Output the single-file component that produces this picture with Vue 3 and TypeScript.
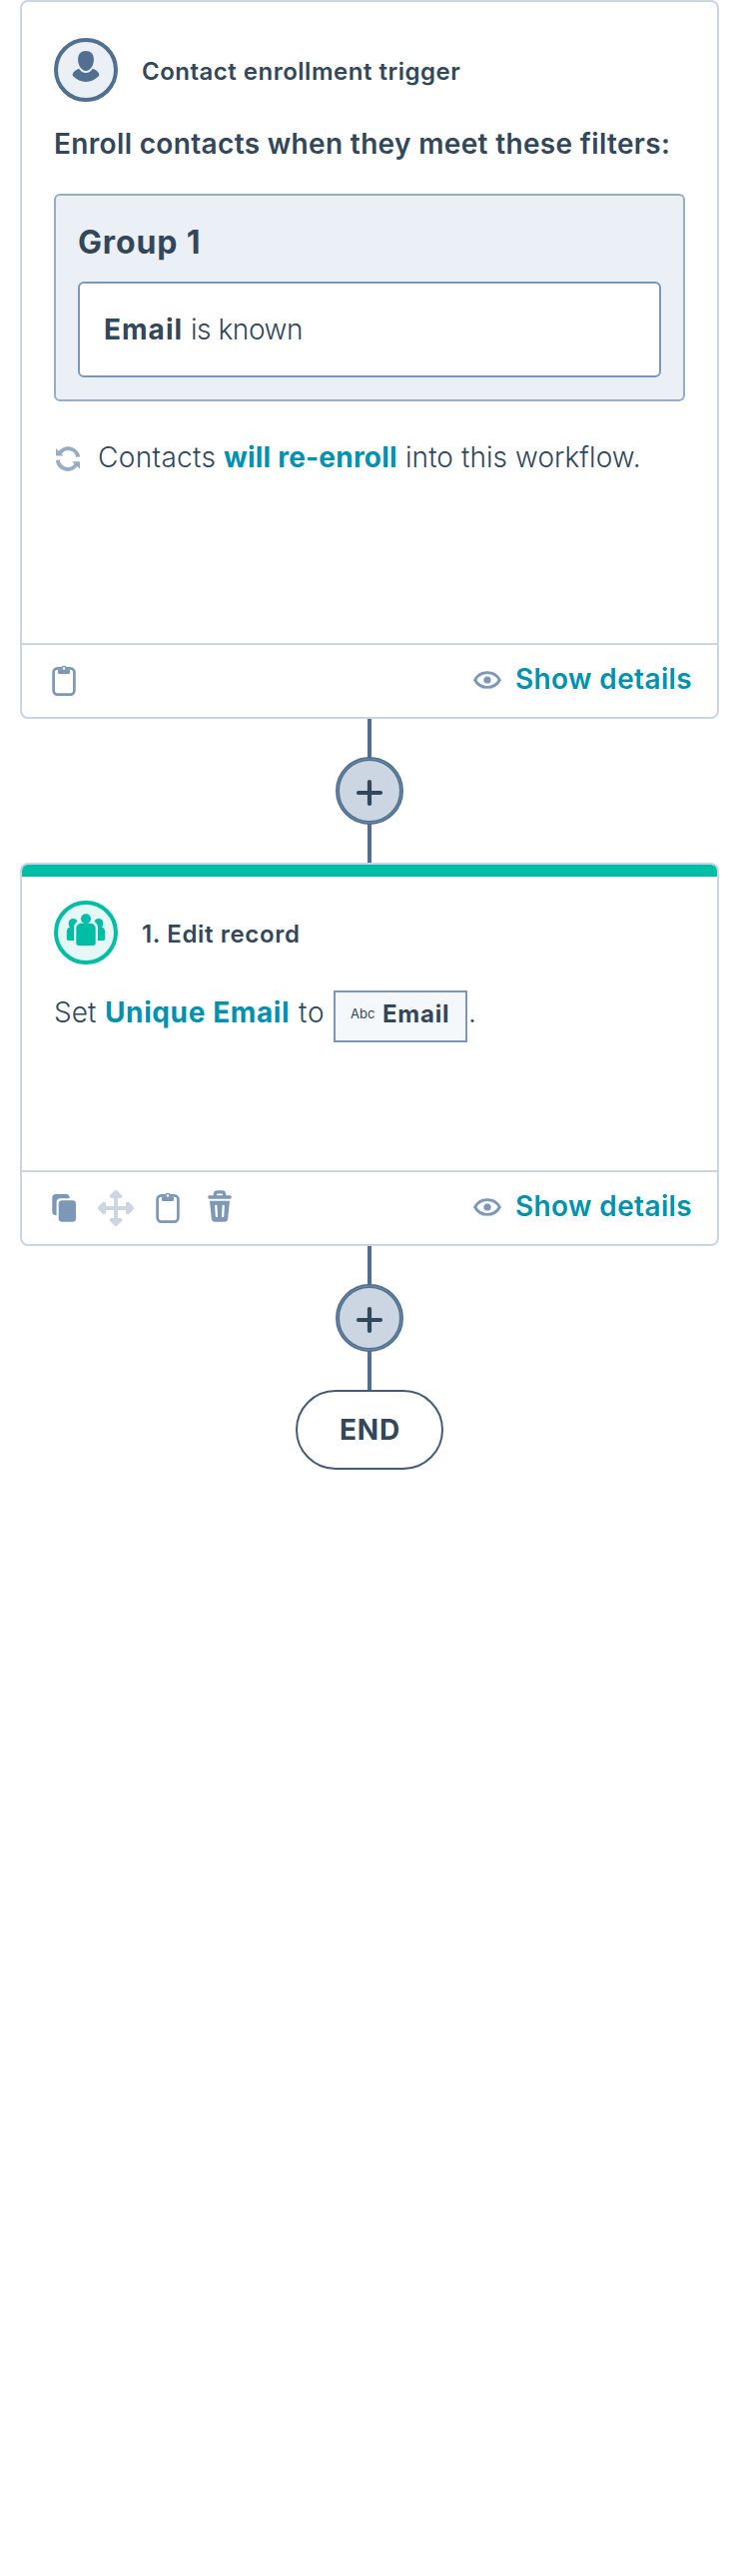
<script setup lang="ts">
type Action = 'copy' | 'move' | 'clipboard' | 'trash'

const triggerActions: Action[] = ['clipboard']
const stepActions: Action[] = ['copy', 'move', 'clipboard', 'trash']
</script>

<template>
  <main class="flow">
    <section class="card trigger">
      <header class="head">
        <svg class="avatar" viewBox="0 0 64 64">
          <circle cx="32" cy="32" r="30" fill="#eaf0f6" stroke="#516f90" stroke-width="4" />
          <path fill="#516f90" d="M32 13c4.900 0 7.900 3.400 7.900 8.500C39.900 27.500 36.500 32.900 32 32.900S24.100 27.500 24.100 21.500C24.100 16.400 27.100 13 32 13Z" />
          <path fill="#516f90" d="M25.200 30.700c1.500 2.700 4 4.300 6.800 4.300s5.300-1.600 6.800-4.300c3.300 1 5.700 3 6.500 5.600.3 1-.1 1.600-.9 2.300C41.200 42 36.900 44 32 44s-9.200-2-12.400-5.400c-.8-.7-1.200-1.300-.9-2.300.8-2.600 3.200-4.600 6.500-5.600Z" />
        </svg>
        <span class="title t-trigger">Contact enrollment trigger</span>
      </header>
      <h2 class="lead">Enroll contacts when they meet these filters:</h2>
      <div class="group">
        <h3 class="group-title">Group 1</h3>
        <div class="filter"><b class="f-name">Email</b><span class="f-op">is known</span></div>
      </div>
      <p class="reenroll">
        <svg class="sync" viewBox="0 0 24 25">
          <g fill="none" stroke="#99acc2" stroke-width="4">
            <path d="M3.500 7.500A10 10 0 0 1 22.200 10.800" />
            <path d="M1.800 13.800A10 10 0 0 0 20.600 17.600" />
          </g>
          <path fill="#99acc2" d="M0 2v6.800q0 .7.700.7H7.600ZM24 22.700v-6.800q0-.7-.7-.7H16.200Z" />
        </svg>
        <span class="r-a">Contacts</span><a class="r-b">will re-enroll</a><span class="r-c">into this workflow.</span>
      </p>
      <footer class="foot">
        <div class="actions">
          <span v-for="a in triggerActions" :key="a" class="action">
            <svg class="icon" viewBox="0 0 36 36">
              <rect x="7.600" y="5.400" width="20.800" height="26.200" rx="4" fill="none" stroke="#7c98b6" stroke-width="2.700" />
              <path fill="#7c98b6" d="M12 6.500H24V10q0 1-1 1H13q-1 0-1-1Z" />
              <circle cx="18" cy="5.600" r="2.100" fill="#fff" stroke="#7c98b6" stroke-width="1.500" />
            </svg>
          </span>
        </div>
        <a class="details">
          <svg class="eye" viewBox="0 0 30 20">
            <path d="M2.700 10C5.200 5.200 9.600 2.600 15 2.600S24.800 5.200 27.300 10C24.800 14.800 20.400 17.400 15 17.400S5.200 14.800 2.700 10Z" fill="none" stroke="#7c98b6" stroke-width="2.900" stroke-linejoin="round" />
            <circle cx="15" cy="10" r="3.600" fill="#7c98b6" />
          </svg>
          <span>Show details</span>
        </a>
      </footer>
    </section>

    <div class="link">
      <button class="add" aria-label="Add step">
        <svg viewBox="0 0 68 68"><circle cx="34" cy="34" r="32" /><circle class="ring" cx="34" cy="34" r="32" /><path d="M34 25v22M23 36h22" /></svg>
      </button>
    </div>

    <section class="card step">
      <div class="stripe"></div>
      <header class="head">
        <svg class="avatar" viewBox="0 0 64 64">
          <circle cx="32" cy="32" r="30" fill="#e5f8f6" stroke="#00bda5" stroke-width="4" />
          <g fill="#00bda5">
            <circle cx="32" cy="18.200" r="5" />
            <path d="M22.300 28c0-3 2.400-5.200 5.400-5.200h8.600c3 0 5.400 2.200 5.400 5.200v15q0 2-2 2H24.300q-2 0-2-2Z" />
            <path d="M19.300 18c2.100 0 3.700 1.100 4.300 3-2 1.100-3.200 2.900-3.500 5.200V40H14.500q-1.700 0-1.700-1.700V31c0-2.200 1.200-3.800 3.100-4.300-.8-1-1.200-2.600-1.200-4.100 0-2.700 2-4.600 4.600-4.600Z" />
            <path transform="matrix(-1 0 0 1 64 0)" d="M19.300 18c2.100 0 3.700 1.100 4.300 3-2 1.100-3.200 2.900-3.500 5.200V40H14.500q-1.700 0-1.700-1.700V31c0-2.200 1.200-3.800 3.100-4.300-.8-1-1.200-2.600-1.200-4.100 0-2.700 2-4.600 4.600-4.600Z" />
          </g>
        </svg>
        <span class="title t-step">1. Edit record</span>
      </header>
      <p class="set">
        <span class="s-a">Set</span><a class="s-b">Unique Email</a><span class="s-c">to</span>
        <span class="token"><small>Abc</small><b>Email</b></span><span class="s-d">.</span>
      </p>
      <footer class="foot">
        <div class="actions">
          <span v-for="a in stepActions" :key="a" class="action">
            <svg v-if="a === 'copy'" class="icon" viewBox="0 0 36 36" fill="#7c98b6">
              <rect x="12.700" y="10.300" width="17.300" height="21.400" rx="3.400" />
              <path d="M9.800 4h10.400c2 0 3.400 1.300 3.500 4.200H14.600c-2.600 0-4 1.500-4 4v13C7.800 25.100 6.300 23.900 6.300 22V7.500C6.300 5.400 7.700 4 9.800 4Z" />
            </svg>
            <svg v-else-if="a === 'move'" class="icon" viewBox="0 0 36 36" fill="#cbd6e2" stroke="#cbd6e2" stroke-width="4" stroke-linecap="round" stroke-linejoin="round">
              <path d="M18 3v30M3 18h30" />
              <path d="M13.700 6.100 18 2l4.300 4.100ZM13.700 29.900 18 34l4.300-4.100ZM6.100 13.700 2 18l4.100 4.300ZM29.900 13.700 34 18l-4.100 4.300Z" />
            </svg>
            <svg v-else-if="a === 'clipboard'" class="icon" viewBox="0 0 36 36">
              <rect x="7.600" y="5.400" width="20.800" height="26.200" rx="4" fill="none" stroke="#7c98b6" stroke-width="2.700" />
              <path fill="#7c98b6" d="M12 6.500H24V10q0 1-1 1H13q-1 0-1-1Z" />
              <circle cx="18" cy="5.600" r="2.100" fill="#fff" stroke="#7c98b6" stroke-width="1.500" />
            </svg>
            <svg v-else class="icon" viewBox="0 0 36 36">
              <path fill="none" stroke="#7c98b6" stroke-width="3.200" d="M13.300 6V4.500q0-2.700 2.700-2.700h4q2.700 0 2.700 2.700V6" />
              <rect x="6.400" y="5.200" width="23.200" height="3.600" rx="1" fill="#7c98b6" />
              <path fill="#7c98b6" d="M8 10.800H28L26.200 28.500q-.3 3.200-3.400 3.200H13.200q-3.100 0-3.400-3.200Z" />
              <path stroke="#fff" stroke-width="2.300" stroke-linecap="round" d="M14.300 16 14.900 26M21.700 16 21.100 26" />
            </svg>
          </span>
        </div>
        <a class="details">
          <svg class="eye" viewBox="0 0 30 20">
            <path d="M2.700 10C5.200 5.200 9.600 2.600 15 2.600S24.800 5.200 27.300 10C24.800 14.800 20.400 17.400 15 17.400S5.200 14.800 2.700 10Z" fill="none" stroke="#7c98b6" stroke-width="2.900" stroke-linejoin="round" />
            <circle cx="15" cy="10" r="3.600" fill="#7c98b6" />
          </svg>
          <span>Show details</span>
        </a>
      </footer>
    </section>

    <div class="link">
      <button class="add" aria-label="Add step">
        <svg viewBox="0 0 68 68"><circle cx="34" cy="34" r="32" /><circle class="ring" cx="34" cy="34" r="32" /><path d="M34 25v22M23 36h22" /></svg>
      </button>
    </div>
    <div class="end"><span>END</span></div>
  </main>
</template>

<style>
body { background: #fff; }
</style>

<style scoped>
* { box-sizing: border-box; }
.flow {
  width: 740px;
  min-height: 2580px;
  display: flex;
  flex-direction: column;
  align-items: center;
  background: #fff;
  color: #33475b;
  font: 350 28px/40px Inter, "Noto Sans", sans-serif;
}
h2, h3, p { margin: 0; }
b { font-weight: 700; }
a { color: #0091ae; font-weight: 700; }
svg { display: block; flex: none; }
.card {
  width: 700px;
  border: 2px solid #cbd6e2;
  border-radius: 8px;
  overflow: hidden;
  display: flex;
  flex-direction: column;
}
.trigger { height: 720px; padding-top: 36px; }
.step { height: 384px; }
.stripe { height: 12px; background: #00bda5; flex: none; }
.step .head { margin-top: 24px; }
.head { display: flex; gap: 24px; margin-left: 32px; height: 64px; flex: none; }
.avatar { width: 64px; height: 64px; }
.title { font-size: 24px; font-weight: 600; line-height: 67px; white-space: nowrap; }
.t-trigger { letter-spacing: .5px; }
.t-step { letter-spacing: .65px; }
.lead { margin: 22px 0 0 32px; font-size: 28px; font-weight: 600; letter-spacing: .34px; white-space: nowrap; }
.group {
  margin: 30px 32px 0;
  height: 208px;
  padding: 27px 22px 21px;
  border: 2px solid #99acc2;
  border-radius: 6px;
  background: #eaf0f6;
}
.group-title { font-size: 32px; font-weight: 700; letter-spacing: .85px; margin-bottom: 19px; }
.filter {
  height: 96px;
  display: flex;
  padding: 26px 24px 0;
  border: 2px solid #7c98b6;
  border-radius: 6px;
  background: #fff;
}
.filter > * { white-space: nowrap; }
.f-name { width: 87px; letter-spacing: 1.02px; }
.f-op { letter-spacing: -.45px; }
.reenroll, .set { display: flex; margin-left: 32px; white-space: nowrap; }
.reenroll { margin-top: 36px; }
.sync { width: 24px; height: 25px; margin: 9px 18px 0 2px; }
.r-a { width: 126px; letter-spacing: .35px; }
.r-b { width: 182px; letter-spacing: .21px; }
.r-c { letter-spacing: .07px; }
.set { margin-top: 26px; }
.set > span:not(.token), .s-b { margin-top: 2px; }
.s-a { width: 51px; letter-spacing: .04px; }
.s-b { width: 194px; letter-spacing: .61px; }
.s-c { width: 35px; letter-spacing: .88px; }
.token {
  width: 134px;
  height: 52px;
  display: flex;
  padding-left: 15px;
  border: 2px solid #7c98b6;
  background: #f5f8fa;
}
.token small { width: 32px; font-size: 13px; font-weight: 400; line-height: 42px; letter-spacing: .04px; }
.token b { font-size: 24px; line-height: 43px; letter-spacing: .77px; }
.s-d { margin-left: 1px; }
.foot {
  height: 74px;
  margin-top: auto;
  flex: none;
  display: flex;
  justify-content: space-between;
  align-items: center;
  padding: 0 26px 0 16px;
  border-top: 2px solid #cbd6e2;
}
.actions { display: flex; }
.action { width: 52px; display: flex; justify-content: center; }
.icon { width: 36px; height: 36px; }
.details { display: flex; gap: 13px; align-items: center; font-weight: 600; letter-spacing: .36px; padding-bottom: 2px; }
.details span { width: 176px; white-space: nowrap; margin-bottom: 2px; }
.eye { width: 30px; height: 20px; }
.link {
  height: 144px;
  width: 68px;
  display: flex;
  justify-content: center;
  align-items: center;
  background: linear-gradient(#516f90, #516f90) center / 4px 100% no-repeat;
}
.add { width: 68px; height: 68px; padding: 0; border: 0; background: none; }
.add circle { fill: #cbd6e2; stroke: #516f90; stroke-width: 4; }
.add .ring { fill: none; stroke: #7c98b6; stroke-width: .7; }
.add path { fill: none; stroke: #33475b; stroke-width: 4.2; stroke-linecap: round; }
.end {
  width: 148px;
  height: 80px;
  display: flex;
  justify-content: center;
  border: 2px solid #425b76;
  border-radius: 40px;
  font-weight: 700;
  line-height: 76px;
  letter-spacing: .83px;
}
.end span { margin-left: 1px; }
</style>
